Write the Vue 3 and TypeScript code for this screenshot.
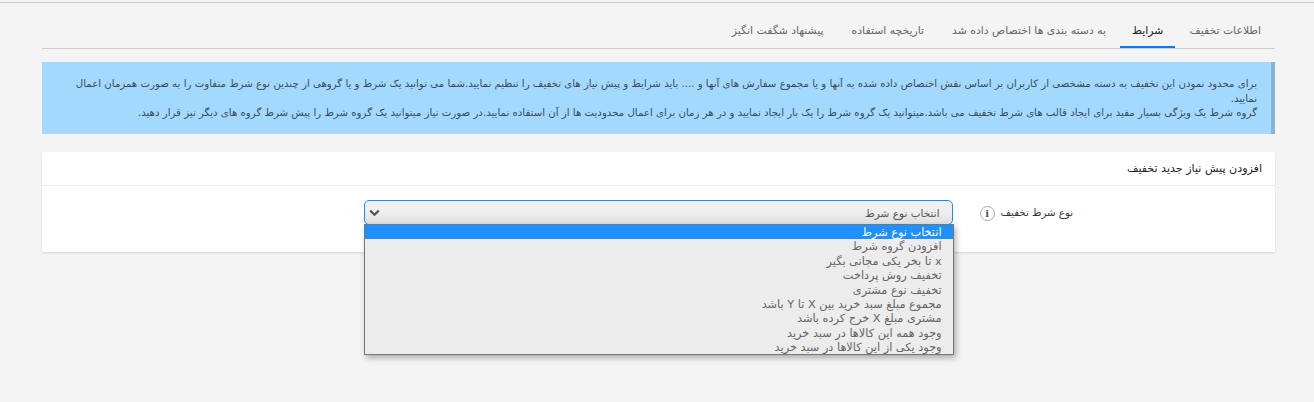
<script setup lang="ts">
const tabs = ['اطلاعات تخفیف', 'شرایط', 'به دسته بندی ها اختصاص داده شد', 'تاریخچه استفاده', 'پیشنهاد شگفت انگیز']
const options = [
  'انتخاب نوع شرط',
  'افزودن گروه شرط',
  'x تا بخر یکی مجانی بگیر',
  'تخفیف روش پرداخت',
  'تخفیف نوع مشتری',
  'مجموع مبلغ سبد خرید بین X تا Y باشد',
  'مشتری مبلغ X خرج کرده باشد',
  'وجود همه این کالاها در سبد خرید',
  'وجود یکی از این کالاها در سبد خرید',
]
</script>

<template>
  <div class="page" dir="rtl">
    <nav class="tabs">
      <a v-for="(t, i) in tabs" :key="t" class="tab" :class="{ active: i === 1 }">{{ t }}</a>
    </nav>
    <div class="alert">
      برای محدود نمودن این تخفیف به دسته مشخصی از کاربران بر اساس نقش اختصاص داده شده به آنها و یا مجموع سفارش های آنها و .... باید شرایط و پیش نیاز های تخفیف را تنظیم نمایید.شما می توانید یک شرط و یا گروهی از چندین نوع شرط متفاوت را به صورت همزمان اعمال نمایید.<br />
      گروه شرط یک ویژگی بسیار مفید برای ایجاد قالب های شرط تخفیف می باشد.میتوانید یک گروه شرط را یک بار ایجاد نمایید و در هر زمان برای اعمال محدودیت ها از آن استفاده نمایید.در صورت نیاز میتوانید یک گروه شرط را پیش شرط گروه های دیگر نیز قرار دهید.
    </div>
    <section class="card">
      <h2 class="card-title">افزودن پیش نیاز جدید تخفیف</h2>
      <div class="row">
        <label class="label">نوع شرط تخفیف</label>
        <span class="info">i</span>
        <div class="select-wrap">
          <div class="select">
            <span>انتخاب نوع شرط</span>
            <svg class="chev" width="11" height="8" viewBox="0 0 11 8">
              <path d="M1.2 1.6 5.5 5.8 9.8 1.6" fill="none" stroke="#555" stroke-width="2.2" />
            </svg>
          </div>
          <ul class="list">
            <li v-for="(o, i) in options" :key="o" :class="{ sel: i === 0 }">{{ o }}</li>
          </ul>
        </div>
      </div>
    </section>
  </div>
</template>

<style>
html,
body {
  background: #f4f4f4;
}
</style>

<style scoped>
.page {
  box-sizing: border-box;
  width: 1314px;
  height: 400px;
  padding: 13px 39px 0 42px;
  background: #f4f4f4;
  border-top: 1px solid #c9c9c9;
  margin-top: 2px;
  font-family: "DejaVu Sans", sans-serif;
  font-size: 10.2px;
  color: #4a4a4a;
  overflow: hidden;
}
.page > .tabs {
  margin-top: 0;
}
.tabs {
  display: flex;
  height: 32px;
  border-bottom: 1px solid #ccc;
}
.tab {
  box-sizing: border-box;
  height: 32px;
  padding: 8px 14px 0;
  font-size: 10.85px;
  color: #666;
  white-space: nowrap;
}
.tab.active {
  padding: 8px 12px 0;
  color: #222;
  border-bottom: 2px solid #0a7cf0;
}
.alert {
  box-sizing: border-box;
  height: 72px;
  margin-top: 13px;
  padding: 15px 14px 0 14px;
  background: #a3d9ff;
  border-right: 4px solid #83b5d9;
  line-height: 14.5px;
  color: #3d4c58;
}
.card {
  margin-top: 18px;
  height: 100px;
  background: #fff;
  box-shadow: 0 1px 2px rgba(0, 0, 0, 0.12);
}
.card-title {
  box-sizing: border-box;
  height: 34px;
  margin: 0;
  padding: 10px 13px 0;
  font-size: 11.1px;
  font-weight: 400;
  color: #222;
  border-bottom: 1px solid #ececec;
}
.row {
  display: flex;
  align-items: flex-start;
  padding: 14px 202px 0 0;
}
.label {
  margin-top: 7px;
  color: #333;
  white-space: nowrap;
}
.info {
  box-sizing: border-box;
  width: 15px;
  height: 15px;
  margin: 6px 6px 0 0;
  border: 1px solid #aaa;
  border-radius: 50%;
  font-family: "DejaVu Serif", serif;
  font-size: 10px;
  font-weight: 700;
  line-height: 13px;
  text-align: center;
  color: #555;
}
.select-wrap {
  position: relative;
  width: 589px;
  margin-right: 27px;
}
.select {
  box-sizing: border-box;
  display: flex;
  justify-content: space-between;
  align-items: center;
  height: 25px;
  padding: 0 12px 0 4px;
  border: 1px solid #1a8cff;
  border-radius: 5px;
  background: linear-gradient(#f0f0f0 40%, #e0e0e0);
  font-size: 10.5px;
  color: #555;
}
.chev {
  display: block;
}
.list {
  position: absolute;
  top: 24px;
  right: -1px;
  box-sizing: border-box;
  width: 590px;
  height: 131px;
  margin: 0;
  padding: 0;
  list-style: none;
  background: #ececec;
  border: 1px solid #777777;
  box-shadow: 2px 3px 6px rgba(0, 0, 0, 0.3);
  font-size: 11.3px;
  color: #666;
}
.list li {
  height: 14.4px;
  line-height: 16px;
  padding: 0 11px;
  white-space: nowrap;
}
.list li.sel {
  background: #1e90ff;
  color: #fff;
}
</style>
